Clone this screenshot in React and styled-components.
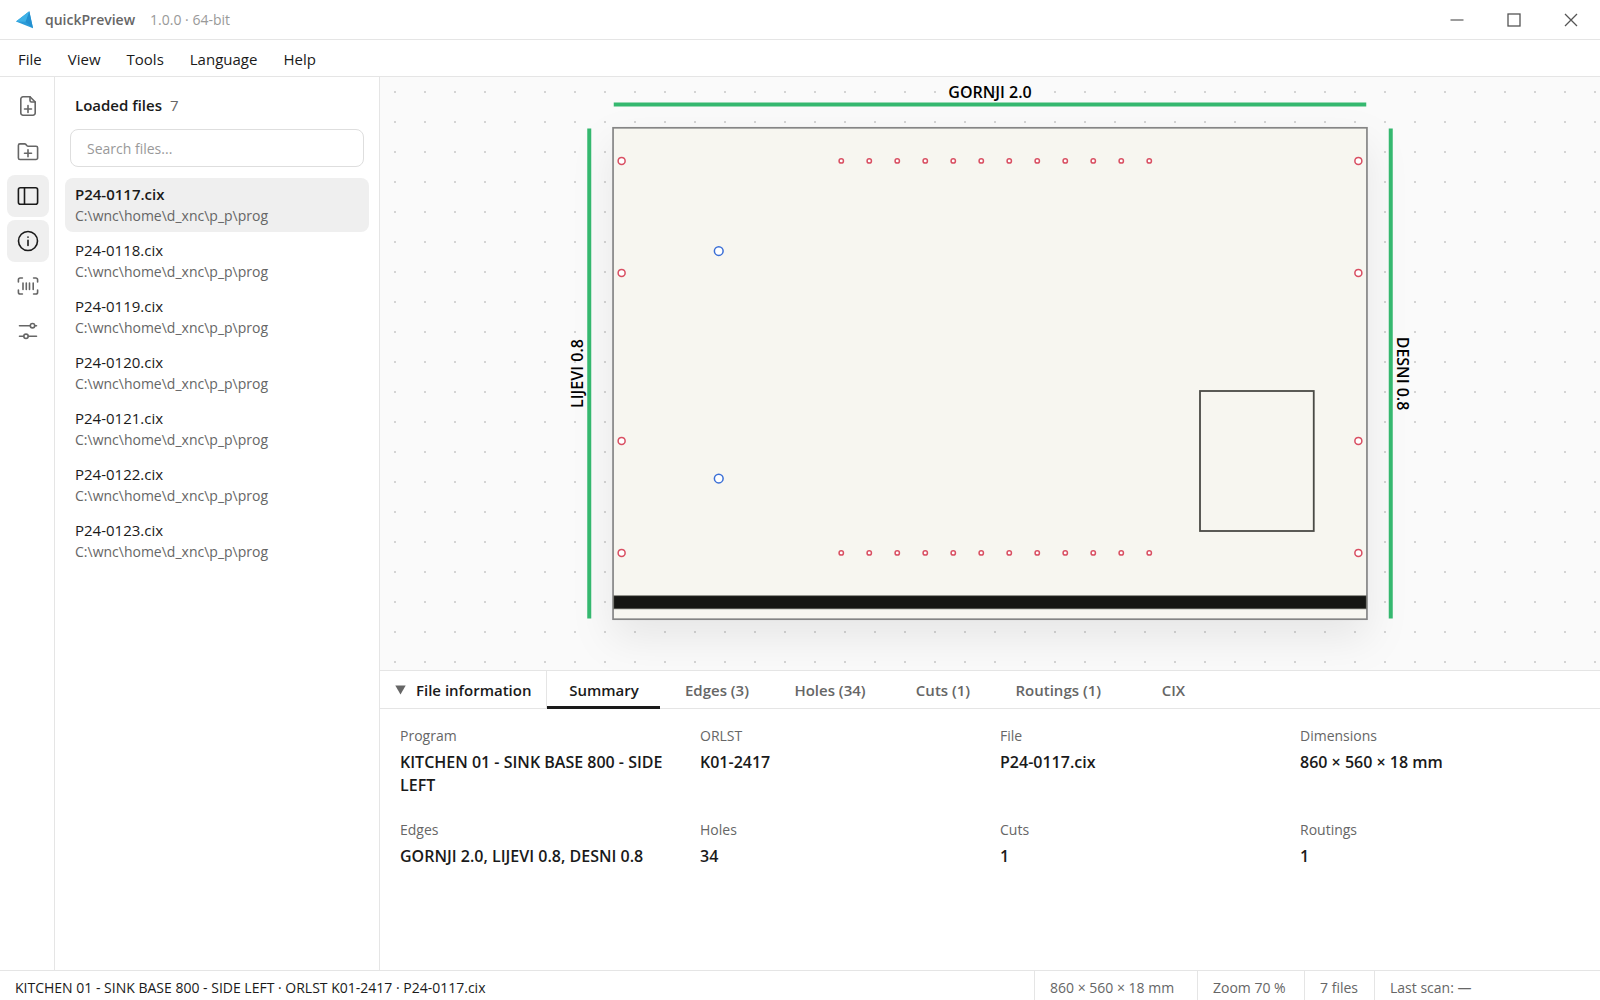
import React, { useState } from "react";
import styled, { createGlobalStyle, ThemeProvider } from "styled-components";

const theme = {
  colors: {
    text: "#1a1a1a",
    muted: "#666666",
    faint: "#999999",
    line: "#e5e5e5",
    active: "#efefef",
    canvas: "#fafafa",
    board: "#f7f6f0",
    edge: "#35b86f",
    hole: "#d94f62",
    drill: "#3b6fd6",
  },
  font: `"Segoe UI", "Open Sans", "Noto Sans", sans-serif`,
};

const GlobalStyle = createGlobalStyle`
  * {
    box-sizing: border-box;
  }

  body {
    margin: 0;
    background: #ffffff;
  }

  button,
  input {
    font: inherit;
    color: inherit;
  }

  button {
    margin: 0;
    padding: 0;
    border: 0;
    background: none;
    cursor: default;
  }
`;

const Window = styled.div`
  display: flex;
  flex-direction: column;
  height: 100vh;
  overflow: hidden;
  font-family: ${(props) => props.theme.font};
  font-size: 14px;
  line-height: 22px;
  color: ${(props) => props.theme.colors.text};
`;

const TitleBar = styled.header`
  display: flex;
  align-items: center;
  flex: none;
  height: 40px;
  padding: 0 1px 0 15px;
  border-bottom: 1px solid ${(props) => props.theme.colors.line};
`;

const AppName = styled.span`
  margin-left: 10px;
  font-weight: 600;
  color: ${(props) => props.theme.colors.muted};
`;

const Version = styled.span`
  margin-left: 15px;
  color: ${(props) => props.theme.colors.faint};
`;

const WindowButtons = styled.div`
  display: flex;
  align-self: stretch;
  margin-left: auto;
`;

const WindowButton = styled.button`
  display: flex;
  align-items: center;
  justify-content: center;
  width: 57px;
`;

const MenuBar = styled.nav`
  display: flex;
  flex: none;
  height: 37px;
  padding-left: 5px;
  border-bottom: 1px solid ${(props) => props.theme.colors.line};
`;

const MenuItem = styled.button`
  padding: 1px 13px 0;
  font-size: 15px;
`;

const Body = styled.div`
  display: flex;
  flex: 1;
  min-height: 0;
`;

const Rail = styled.div`
  display: flex;
  flex-direction: column;
  align-items: center;
  gap: 3px;
  flex: none;
  width: 55px;
  padding: 8px 0 0 1px;
  border-right: 1px solid ${(props) => props.theme.colors.line};
`;

const RailButton = styled.button`
  display: flex;
  align-items: center;
  justify-content: center;
  width: 42px;
  height: 42px;
  border-radius: 8px;
  color: ${(props) => (props.$active ? props.theme.colors.text : props.theme.colors.muted)};
  background: ${(props) => (props.$active ? props.theme.colors.active : "none")};
`;

const Sidebar = styled.aside`
  display: flex;
  flex-direction: column;
  flex: none;
  width: 325px;
  padding: 17px 10px 0;
  border-right: 1px solid ${(props) => props.theme.colors.line};
`;

const SidebarTitle = styled.h2`
  margin: 0 10px 13px;
  font-size: 15px;
  font-weight: 600;
  line-height: 22px;
`;

const FileCount = styled.span`
  margin-left: 8px;
  font-weight: 400;
  color: ${(props) => props.theme.colors.muted};
`;

const SearchInput = styled.input`
  height: 38px;
  margin: 0 5px;
  padding: 0 16px;
  border: 1px solid #dedede;
  border-radius: 8px;
  outline: none;

  &::placeholder {
    color: ${(props) => props.theme.colors.faint};
    opacity: 1;
  }
`;

const FileList = styled.ul`
  display: flex;
  flex-direction: column;
  gap: 2px;
  margin: 11px 0 0;
  padding: 0;
  list-style: none;
`;

const FileButton = styled.button`
  display: block;
  width: 100%;
  height: 54px;
  padding: 0 10px;
  border-radius: 8px;
  text-align: left;
  background: ${(props) => (props.$active ? props.theme.colors.active : "none")};
`;

const FileName = styled.span`
  display: block;
  line-height: 21px;
  font-size: 15px;
  font-weight: ${(props) => (props.$active ? 600 : 400)};
`;

const FilePath = styled.span`
  display: block;
  line-height: 21px;
  color: ${(props) => props.theme.colors.muted};
`;

const Main = styled.main`
  display: flex;
  flex-direction: column;
  flex: 1;
  min-width: 0;
`;

const Canvas = styled.div`
  flex: 1;
  min-height: 0;
  background-color: ${(props) => props.theme.colors.canvas};
  background-image: radial-gradient(circle, #d4d4d4 1px, transparent 1px);
  background-size: 30px 30px;
`;

const Drawing = styled.svg`
  display: block;
  width: 100%;
  height: 100%;
`;

const Board = styled.rect`
  fill: ${(props) => props.theme.colors.board};
  stroke: #858585;
  stroke-width: 1.7;
  filter: drop-shadow(0 18px 20px rgba(0, 0, 0, 0.08));
`;

const EdgeBand = styled.line`
  stroke: ${(props) => props.theme.colors.edge};
  stroke-width: 4;
`;

const EdgeLabel = styled.text`
  font-size: 16px;
  font-weight: 600;
  text-anchor: middle;
  fill: #000000;
`;

const Hole = styled.circle`
  fill: #ffffff;
  stroke: ${(props) => props.theme.colors[props.$tone]};
  stroke-width: 1.5;
`;

const Panel = styled.section`
  flex: none;
  height: 300px;
  border-top: 1px solid ${(props) => props.theme.colors.line};
`;

const PanelHeader = styled.div`
  display: flex;
  height: 38px;
  border-bottom: 1px solid ${(props) => props.theme.colors.line};
`;

const PanelToggle = styled.button`
  display: flex;
  align-items: center;
  gap: 10px;
  padding: 0 15px;
  border-right: 1px solid ${(props) => props.theme.colors.line};
  font-size: 15px;
  font-weight: 600;
`;

const Tab = styled.button`
  min-width: 113px;
  height: 38px;
  padding: 2px 16px 0;
  border-bottom: 3px solid ${(props) => (props.$active ? props.theme.colors.text : "transparent")};
  font-size: 15px;
  font-weight: 600;
  color: ${(props) => (props.$active ? props.theme.colors.text : props.theme.colors.muted)};
`;

const Facts = styled.dl`
  display: grid;
  grid-template-columns: repeat(4, 1fr);
  gap: 22px 20px;
  margin: 0;
  padding: 16px 20px;
`;

const FactLabel = styled.dt`
  color: ${(props) => props.theme.colors.muted};
`;

const FactValue = styled.dd`
  margin: 4px 0 0;
  font-size: 16px;
  font-weight: 600;
  line-height: 23px;
`;

const StatusBar = styled.footer`
  display: flex;
  flex: none;
  height: 30px;
  border-top: 1px solid ${(props) => props.theme.colors.line};
  line-height: 34px;
`;

const StatusText = styled.span`
  flex: 1;
  padding-left: 15px;
`;

const StatusCell = styled.span`
  min-width: ${(props) => `${props.$minWidth}px`};
  padding: 0 15px;
  border-left: 1px solid ${(props) => props.theme.colors.line};
  color: ${(props) => props.theme.colors.muted};
`;

const Icon = ({ children }) => (
  <svg
    width="24"
    height="24"
    viewBox="0 0 24 24"
    fill="none"
    stroke="currentColor"
    strokeWidth="1.6"
    strokeLinecap="round"
    strokeLinejoin="round"
    aria-hidden="true"
  >
    {children}
  </svg>
);

const railItems = [
  {
    label: "Open file",
    icon: (
      <>
        <path d="M14 2.8H7A2.2 2.2 0 0 0 4.8 5v14A2.2 2.2 0 0 0 7 21.2h10a2.2 2.2 0 0 0 2.2-2.2V8z" />
        <path d="M14 2.8V6.5A1.5 1.5 0 0 0 15.5 8h3.7" />
        <path d="M12 11.5v7M8.5 15h7" />
      </>
    ),
  },
  {
    label: "Open folder",
    icon: (
      <>
        <path d="M2.4 18.9V6.400a1.5 1.5 0 0 1 1.5-1.5h4.8a1.5 1.5 0 0 1 1.1.5l1.2 1.300a1.5 1.5 0 0 0 1.1.5h8a1.5 1.5 0 0 1 1.5 1.5v10.200a1.6 1.6 0 0 1-1.6 1.6H4a1.6 1.6 0 0 1-1.6-1.6z" />
        <path d="M12 10.700v7M8.5 14.200h7" />
      </>
    ),
  },
  {
    label: "Toggle file list",
    active: true,
    icon: (
      <>
        <rect x="2.4" y="3.7" width="19.2" height="16.6" rx="2" />
        <path d="M8.5 3.7v16.6" />
      </>
    ),
  },
  {
    label: "Toggle file information",
    active: true,
    icon: (
      <>
        <circle cx="12" cy="12" r="9.5" />
        <path d="M12 11.3v5.2M12 8.1v.1" />
      </>
    ),
  },
  {
    label: "Scan barcode",
    icon: (
      <>
        <path d="M2.4 8V5.8A1.8 1.8 0 0 1 4.2 4h2.2M17.6 4h2.2a1.8 1.8 0 0 1 1.8 1.8V8M21.6 16v2.2a1.8 1.8 0 0 1-1.8 1.8h-2.2M6.4 20H4.2a1.8 1.8 0 0 1-1.8-1.8V16" />
        <path d="M7 9v6.5M10.3 9v6.5M13.5 9v6.5M17.2 9v6.5" />
      </>
    ),
  },
  {
    label: "Settings",
    icon: (
      <>
        <path d="M3.5 6.7h10.6M18.8 6.7h1.7M3.5 17.3h4.1M12.4 17.3h8.1" />
        <circle cx="16.5" cy="6.7" r="2.2" />
        <circle cx="10" cy="17.3" r="2.2" />
      </>
    ),
  },
];

const files = [117, 118, 119, 120, 121, 122, 123].map((n) => `P24-0${n}.cix`);

const tabs = ["Summary", "Edges (3)", "Holes (34)", "Cuts (1)", "Routings (1)", "CIX"];

const facts = [
  ["Program", "KITCHEN 01 - SINK BASE 800 - SIDE LEFT"],
  ["ORLST", "K01-2417"],
  ["File", "P24-0117.cix"],
  ["Dimensions", "860 × 560 × 18 mm"],
  ["Edges", "GORNJI 2.0, LIJEVI 0.8, DESNI 0.8"],
  ["Holes", "34"],
  ["Cuts", "1"],
  ["Routings", "1"],
];

// board data in mm
const BOARD = { width: 860, height: 560 };
const SCALE = 0.875;

const sideHoles = [9, 851].flatMap((x) => [37, 165, 357, 485].map((y) => ({ x, y, d: 8 })));
const shelfHoles = [37, 485].flatMap((y) =>
  Array.from({ length: 12 }, (_, i) => ({ x: 260 + i * 32, y, d: 5 }))
);
const faceHoles = [
  { x: 120, y: 140, d: 10 },
  { x: 120, y: 400, d: 10 },
];

function BoardPreview() {
  const w = BOARD.width * SCALE;
  const h = BOARD.height * SCALE;
  const mm = (value) => value * SCALE;

  return (
    <Drawing viewBox="-233.75 -51.5 1220 593" role="img" aria-label="Board preview">
      <Board x="-0.7" y="-0.7" width={w + 1.4} height={h + 1.4} />
      <rect x="0" y={mm(534)} width={w} height={mm(15)} fill="#161613" stroke="#77776f" strokeWidth="0.7" />
      <rect
        x={mm(670)}
        y={mm(300)}
        width={mm(130)}
        height={mm(160)}
        fill="none"
        stroke="#4a4a45"
        strokeWidth="1.8"
      />
      {[...sideHoles, ...shelfHoles].map((hole) => (
        <Hole key={`${hole.x}-${hole.y}`} $tone="hole" cx={mm(hole.x)} cy={mm(hole.y)} r={mm(hole.d / 2)} />
      ))}
      {faceHoles.map((hole) => (
        <Hole key={`${hole.x}-${hole.y}`} $tone="drill" cx={mm(hole.x)} cy={mm(hole.y)} r={mm(hole.d / 2)} />
      ))}
      <EdgeBand x1="0" y1="-24" x2={w} y2="-24" />
      <EdgeBand x1="-24.5" y1="0" x2="-24.5" y2={h} />
      <EdgeBand x1={w + 24.5} y1="0" x2={w + 24.5} y2={h} />
      <EdgeLabel x={w / 2} y="-31">
        GORNJI 2.0
      </EdgeLabel>
      <EdgeLabel transform={`translate(-31 ${h / 2}) rotate(-90)`}>LIJEVI 0.8</EdgeLabel>
      <EdgeLabel transform={`translate(${w + 31} ${h / 2}) rotate(90)`}>DESNI 0.8</EdgeLabel>
    </Drawing>
  );
}

function App() {
  const [selected, setSelected] = useState(files[0]);
  const [tab, setTab] = useState(tabs[0]);

  return (
    <ThemeProvider theme={theme}>
      <GlobalStyle />
      <Window>
        <TitleBar>
          <svg width="20" height="20" viewBox="0 0 20 20" aria-hidden="true">
            <path d="M1 11.5L14.3 1.2 18 18.2z" fill="#2b9bd8" />
            <path d="M14.3 1.2L18 18.2 10.5 11.8z" fill="#2390d0" />
            <path d="M1 11.5L14.3 1.2 10.5 11.8z" fill="#3eb1e6" />
          </svg>
          <AppName>quickPreview</AppName>
          <Version>1.0.0 · 64-bit</Version>
          <WindowButtons>
            <WindowButton aria-label="Minimize">
              <svg width="14" height="14" viewBox="0 0 14 14" stroke="#666666" fill="none">
                <path d="M0.5 7h13" strokeWidth="1.3" />
              </svg>
            </WindowButton>
            <WindowButton aria-label="Maximize">
              <svg width="14" height="14" viewBox="0 0 14 14" stroke="#555555" fill="none">
                <rect x="1" y="1" width="12" height="12" strokeWidth="1.3" />
              </svg>
            </WindowButton>
            <WindowButton aria-label="Close">
              <svg width="14" height="14" viewBox="0 0 14 14" stroke="#555555" fill="none">
                <path d="M1 1l12 12M13 1L1 13" strokeWidth="1.3" />
              </svg>
            </WindowButton>
          </WindowButtons>
        </TitleBar>
        <MenuBar>
          {["File", "View", "Tools", "Language", "Help"].map((item) => (
            <MenuItem key={item}>{item}</MenuItem>
          ))}
        </MenuBar>
        <Body>
          <Rail>
            {railItems.map((item) => (
              <RailButton key={item.label} $active={item.active} aria-label={item.label}>
                <Icon>{item.icon}</Icon>
              </RailButton>
            ))}
          </Rail>
          <Sidebar>
            <SidebarTitle>
              Loaded files
              <FileCount>{files.length}</FileCount>
            </SidebarTitle>
            <SearchInput type="text" placeholder="Search files..." aria-label="Search files" />
            <FileList>
              {files.map((file) => (
                <li key={file}>
                  <FileButton $active={file === selected} onClick={() => setSelected(file)}>
                    <FileName $active={file === selected}>{file}</FileName>
                    <FilePath>C:\wnc\home\d_xnc\p_p\prog</FilePath>
                  </FileButton>
                </li>
              ))}
            </FileList>
          </Sidebar>
          <Main>
            <Canvas>
              <BoardPreview />
            </Canvas>
            <Panel>
              <PanelHeader>
                <PanelToggle>
                  <svg width="11" height="10" viewBox="0 0 11 10" aria-hidden="true">
                    <path d="M0.3 0.5h10.4L5.5 9.5z" fill="#666666" />
                  </svg>
                  File information
                </PanelToggle>
                {tabs.map((name) => (
                  <Tab key={name} $active={name === tab} onClick={() => setTab(name)}>
                    {name}
                  </Tab>
                ))}
              </PanelHeader>
              <Facts>
                {facts.map(([label, value]) => (
                  <div key={label}>
                    <FactLabel>{label}</FactLabel>
                    <FactValue>{value}</FactValue>
                  </div>
                ))}
              </Facts>
            </Panel>
          </Main>
        </Body>
        <StatusBar>
          <StatusText>KITCHEN 01 - SINK BASE 800 - SIDE LEFT · ORLST K01-2417 · P24-0117.cix</StatusText>
          <StatusCell $minWidth={163}>860 × 560 × 18 mm</StatusCell>
          <StatusCell $minWidth={107}>Zoom 70 %</StatusCell>
          <StatusCell $minWidth={70}>7 files</StatusCell>
          <StatusCell $minWidth={226}>Last scan: —</StatusCell>
        </StatusBar>
      </Window>
    </ThemeProvider>
  );
}

export default App;
